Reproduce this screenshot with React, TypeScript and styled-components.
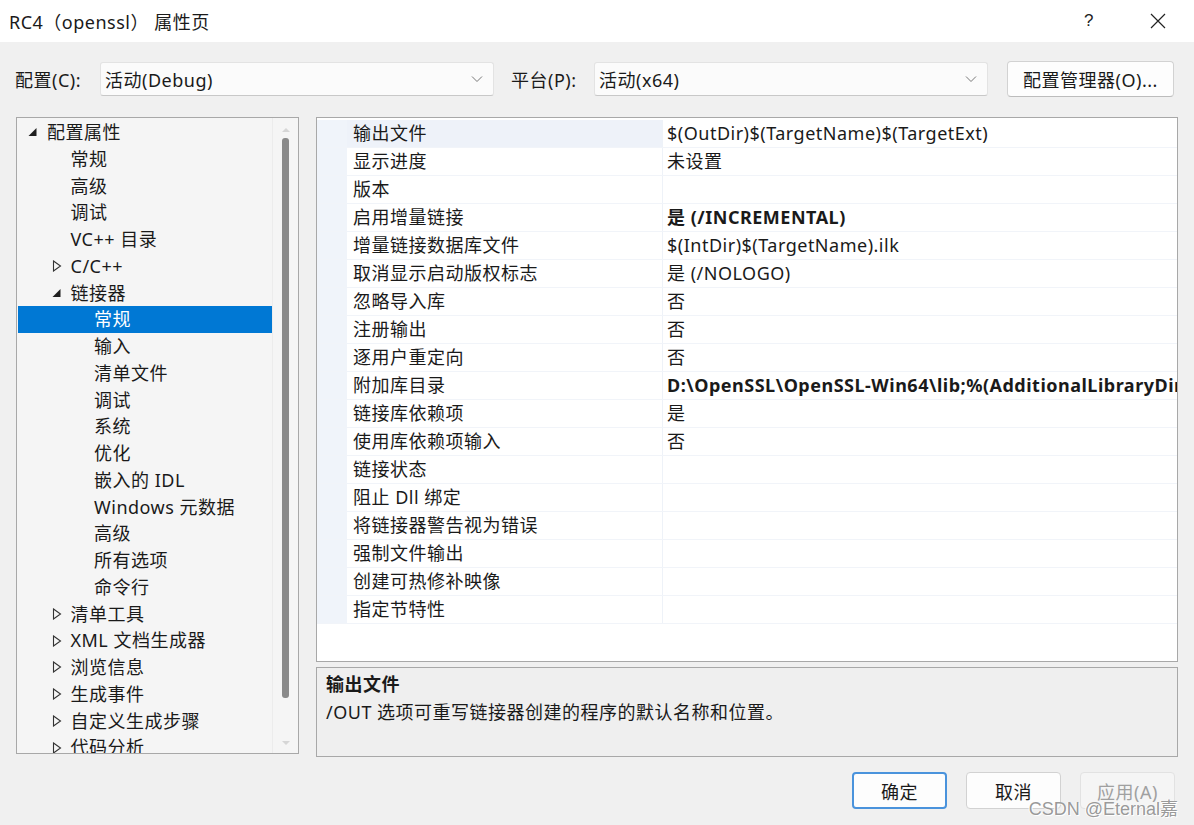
import React from "react";
import styled, { createGlobalStyle } from "styled-components";

const FONT = `"Noto Sans", "Noto Sans CJK SC", sans-serif`;

type TreeItem = {
  label: string;
  level: number;
  expander?: "open" | "closed";
  selected?: boolean;
};

const treeItems: TreeItem[] = [
  { label: "配置属性", level: 0, expander: "open" },
  { label: "常规", level: 1 },
  { label: "高级", level: 1 },
  { label: "调试", level: 1 },
  { label: "VC++ 目录", level: 1 },
  { label: "C/C++", level: 1, expander: "closed" },
  { label: "链接器", level: 1, expander: "open" },
  { label: "常规", level: 2, selected: true },
  { label: "输入", level: 2 },
  { label: "清单文件", level: 2 },
  { label: "调试", level: 2 },
  { label: "系统", level: 2 },
  { label: "优化", level: 2 },
  { label: "嵌入的 IDL", level: 2 },
  { label: "Windows 元数据", level: 2 },
  { label: "高级", level: 2 },
  { label: "所有选项", level: 2 },
  { label: "命令行", level: 2 },
  { label: "清单工具", level: 1, expander: "closed" },
  { label: "XML 文档生成器", level: 1, expander: "closed" },
  { label: "浏览信息", level: 1, expander: "closed" },
  { label: "生成事件", level: 1, expander: "closed" },
  { label: "自定义生成步骤", level: 1, expander: "closed" },
  { label: "代码分析", level: 1, expander: "closed" },
];

type Prop = { name: string; value: string; bold?: boolean };

const props: Prop[] = [
  { name: "输出文件", value: "$(OutDir)$(TargetName)$(TargetExt)" },
  { name: "显示进度", value: "未设置" },
  { name: "版本", value: "" },
  { name: "启用增量链接", value: "是 (/INCREMENTAL)", bold: true },
  { name: "增量链接数据库文件", value: "$(IntDir)$(TargetName).ilk" },
  { name: "取消显示启动版权标志", value: "是 (/NOLOGO)" },
  { name: "忽略导入库", value: "否" },
  { name: "注册输出", value: "否" },
  { name: "逐用户重定向", value: "否" },
  {
    name: "附加库目录",
    value: "D:\\OpenSSL\\OpenSSL-Win64\\lib;%(AdditionalLibraryDirectories)",
    bold: true,
  },
  { name: "链接库依赖项", value: "是" },
  { name: "使用库依赖项输入", value: "否" },
  { name: "链接状态", value: "" },
  { name: "阻止 Dll 绑定", value: "" },
  { name: "将链接器警告视为错误", value: "" },
  { name: "强制文件输出", value: "" },
  { name: "创建可热修补映像", value: "" },
  { name: "指定节特性", value: "" },
];

const Chevron = () => (
  <svg width="12" height="8" viewBox="0 0 12 8">
    <polyline points="1,1.5 6,6.5 11,1.5" fill="none" stroke="#777" strokeWidth="1" />
  </svg>
);

const Expander = ({ kind }: { kind: "open" | "closed" }) =>
  kind === "open" ? (
    <svg width="10" height="10" viewBox="0 0 10 10">
      <polygon points="8.5,1 8.5,9 0.5,9" fill="#1e1e1e" />
    </svg>
  ) : (
    <svg width="10" height="12" viewBox="0 0 10 12">
      <polygon points="1.5,1 8.5,6 1.5,11" fill="none" stroke="#333" strokeWidth="1.1" />
    </svg>
  );

export default function App() {
  return (
    <>
      <GlobalStyle />
      <Window>
        <TitleBar>
          <Title>RC4（openssl） 属性页</Title>
          <TitleButtons>
            <HelpMark>?</HelpMark>
            <svg width="16" height="16" viewBox="0 0 16 16">
              <path d="M1 1 L15 15 M15 1 L1 15" stroke="#222" strokeWidth="1.2" />
            </svg>
          </TitleButtons>
        </TitleBar>

        <Body>
          <ConfigRow>
            <FieldLabel $width={85}>配置(C):</FieldLabel>
            <Dropdown>
              <span>活动(Debug)</span>
              <Chevron />
            </Dropdown>
            <FieldLabel $width={83} $gap={17}>平台(P):</FieldLabel>
            <Dropdown>
              <span>活动(x64)</span>
              <Chevron />
            </Dropdown>
            <ManagerButton>配置管理器(O)...</ManagerButton>
          </ConfigRow>

          <Main>
            <TreePanel>
              <TreeList>
                {treeItems.map((item, i) => (
                  <TreeRow key={i} $level={item.level} $selected={!!item.selected}>
                    {item.expander && (
                      <ExpanderSlot>
                        <Expander kind={item.expander} />
                      </ExpanderSlot>
                    )}
                    {item.label}
                  </TreeRow>
                ))}
              </TreeList>
              <ScrollTrack>
                <ScrollArrow $up />
                <ScrollThumb />
                <ScrollArrow />
              </ScrollTrack>
            </TreePanel>

            <RightColumn>
              <Grid>
                {props.map((p, i) => (
                  <GridRow key={i}>
                    <Gutter />
                    <NameCell $active={i === 0}>{p.name}</NameCell>
                    <ValueCell $bold={!!p.bold}>{p.value}</ValueCell>
                  </GridRow>
                ))}
              </Grid>
              <Description>
                <DescTitle>输出文件</DescTitle>
                <DescText>/OUT 选项可重写链接器创建的程序的默认名称和位置。</DescText>
              </Description>
            </RightColumn>
          </Main>

          <Footer>
            <DialogButton $primary>确定</DialogButton>
            <DialogButton>取消</DialogButton>
            <DialogButton $disabled>应用(A)</DialogButton>
          </Footer>
        </Body>
        <Watermark>CSDN @Eternal嘉</Watermark>
      </Window>
    </>
  );
}

/**
 * Styles
 */
const GlobalStyle = createGlobalStyle`
  html, body {
    margin: 0;
    padding: 0;
    background: #f0f0f0;
  }
  * {
    box-sizing: border-box;
  }
`;

const Window = styled.div`
  position: relative;
  width: 1194px;
  height: 825px;
  display: flex;
  flex-direction: column;
  background: #f0f0f0;
  font-family: ${FONT};
  font-size: 18px;
  letter-spacing: 0.5px;
  color: #1a1a1a;
  overflow: hidden;
`;

const TitleBar = styled.div`
  height: 42px;
  flex: none;
  display: flex;
  align-items: center;
  justify-content: space-between;
  padding: 0 28px 0 9px;
  background: #ffffff;
`;

const Title = styled.div`
  font-size: 18px;
  color: #1a1a1a;
`;

const TitleButtons = styled.div`
  display: flex;
  align-items: center;
  gap: 56px;
`;

const HelpMark = styled.span`
  font-family: "Liberation Sans", sans-serif;
  font-size: 17px;
  color: #222;
`;

const Body = styled.div`
  flex: 1;
  display: flex;
  flex-direction: column;
  padding: 18px 18px 0 15px;
`;

const ConfigRow = styled.div`
  display: flex;
  align-items: center;
  height: 37px;
`;

const FieldLabel = styled.div<{ $width: number; $gap?: number }>`
  width: ${({ $width }) => $width}px;
  margin-left: ${({ $gap }) => $gap ?? 0}px;
  flex: none;
`;

const Dropdown = styled.div`
  width: 394px;
  height: 34px;
  flex: none;
  display: flex;
  align-items: center;
  justify-content: space-between;
  padding: 0 10px 0 4px;
  background: #fbfbfb;
  border: 1px solid #e3e3e3;
  border-bottom-color: #c8c8c8;
  border-radius: 3px;
`;

const ManagerButton = styled.div`
  width: 167px;
  height: 36px;
  margin-left: 19px;
  display: flex;
  align-items: center;
  justify-content: center;
  background: #fdfdfd;
  border: 1px solid #d2d2d2;
  border-bottom-color: #bcbcbc;
  border-radius: 4px;
`;

const Main = styled.div`
  display: flex;
  gap: 17px;
  margin-top: 20px;
  margin-left: 1px;
  height: 640px;
`;

const TreePanel = styled.div`
  width: 283px;
  height: 637px;
  flex: none;
  display: flex;
  background: #f5f5f5;
  border: 1px solid #a8a8a8;
  overflow: hidden;
`;

const TreeList = styled.div`
  flex: 1;
  padding: 1px 0 0 1px;
`;

const TreeRow = styled.div<{ $level: number; $selected: boolean }>`
  position: relative;
  height: 26.75px;
  line-height: 26.75px;
  white-space: nowrap;
  padding-left: ${({ $level }) => 29 + $level * 23.5}px;
  background: ${({ $selected }) => ($selected ? "#0078d4" : "transparent")};
  color: ${({ $selected }) => ($selected ? "#ffffff" : "#1a1a1a")};
`;

const ExpanderSlot = styled.span`
  position: absolute;
  top: 0;
  bottom: 0;
  width: 12px;
  margin-left: -19px;
  display: flex;
  align-items: center;
`;

const ScrollTrack = styled.div`
  width: 26px;
  flex: none;
  display: flex;
  flex-direction: column;
  align-items: center;
  padding: 10px 0 8px;
  border-left: 1px solid #ececec;
`;

const ScrollThumb = styled.div`
  width: 7px;
  height: 560px;
  margin: 6px 0 auto;
  background: #8a8a8a;
  border-radius: 3px;
`;

const ScrollArrow = styled.div<{ $up?: boolean }>`
  width: 0;
  height: 0;
  border-left: 4px solid transparent;
  border-right: 4px solid transparent;
  ${({ $up }) =>
    $up ? "border-bottom: 4px solid #d6d6d6;" : "border-top: 4px solid #d6d6d6;"}
`;

const RightColumn = styled.div`
  width: 862px;
  display: flex;
  flex-direction: column;
  gap: 5px;
`;

const Grid = styled.div`
  height: 545px;
  background: #ffffff;
  border: 1px solid #a8a8a8;
  padding-top: 2px;
  overflow: hidden;
`;

const GridRow = styled.div`
  display: flex;
  height: 28px;
  line-height: 27px;
  border-bottom: 1px solid #f1f4f9;
`;

const Gutter = styled.div`
  width: 30px;
  flex: none;
  background: #f0f4fa;
`;

const NameCell = styled.div<{ $active: boolean }>`
  width: 316px;
  flex: none;
  padding-left: 6px;
  white-space: nowrap;
  background: ${({ $active }) => ($active ? "#eef2f9" : "#ffffff")};
  border-right: 1px solid #eef2f8;
`;

const ValueCell = styled.div<{ $bold: boolean }>`
  flex: 1;
  padding-left: 4px;
  white-space: nowrap;
  overflow: hidden;
  font-weight: ${({ $bold }) => ($bold ? 700 : 400)};
`;

const Description = styled.div`
  height: 90px;
  background: #efefef;
  border: 1px solid #a8a8a8;
  padding: 2px 9px;
`;

const DescTitle = styled.div`
  font-weight: 700;
  line-height: 28px;
`;

const DescText = styled.div`
  line-height: 28px;
`;

const Footer = styled.div`
  display: flex;
  justify-content: flex-end;
  gap: 19px;
  margin-top: 15px;
  padding-right: 1px;
`;

const DialogButton = styled.div<{ $primary?: boolean; $disabled?: boolean }>`
  width: 95px;
  height: 37px;
  display: flex;
  align-items: center;
  justify-content: center;
  border-radius: 4px;
  background: ${({ $disabled }) => ($disabled ? "#f5f5f5" : "#fdfdfd")};
  color: ${({ $disabled }) => ($disabled ? "#a0a0a0" : "#1a1a1a")};
  border: ${({ $primary, $disabled }) =>
    $primary
      ? "2px solid #4a93dc"
      : $disabled
        ? "1px solid #e2e2e2"
        : "1px solid #d2d2d2"};
`;

const Watermark = styled.div`
  position: absolute;
  right: 16px;
  bottom: 5px;
  font-family: "Liberation Sans", "Noto Sans CJK SC", sans-serif;
  font-size: 18px;
  letter-spacing: 0;
  color: #9a9a9a;
  text-shadow: 1px 1px 0 #ffffff, -1px 0 0 #ffffff;
`;
